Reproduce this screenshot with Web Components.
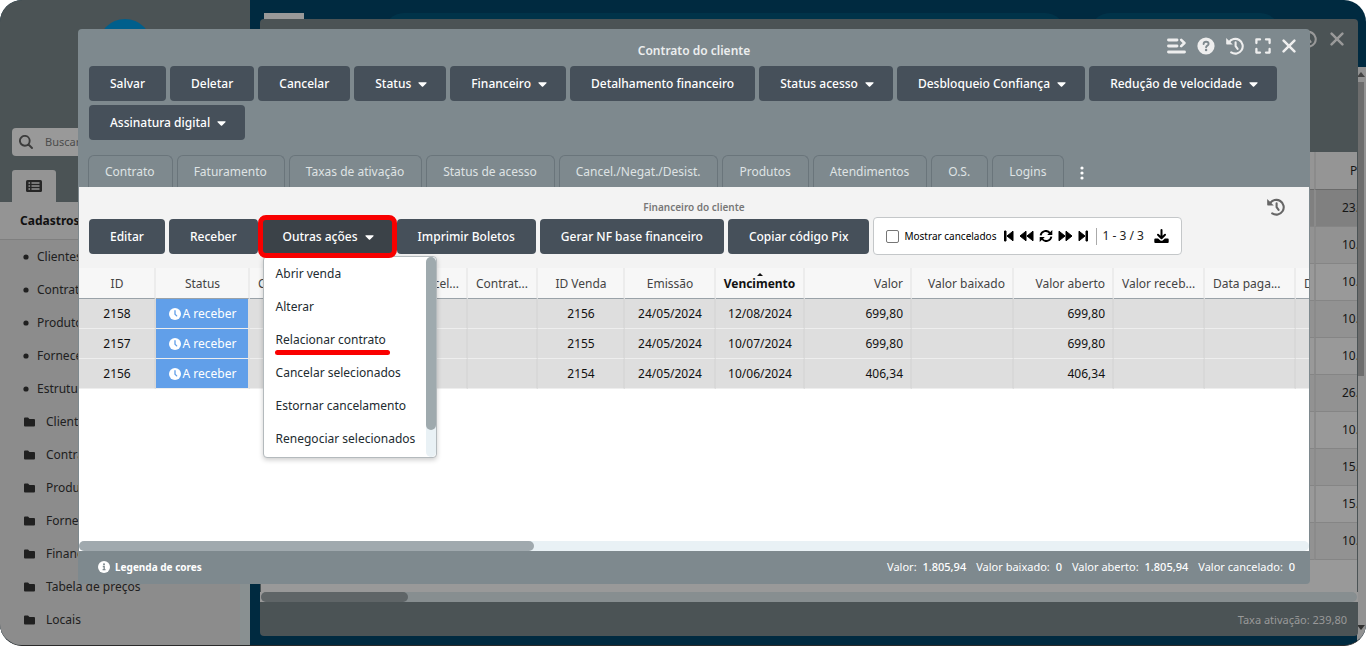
<!DOCTYPE html>
<html lang="pt-BR">
<head>
<meta charset="utf-8">
<title>Contrato do cliente</title>
<style>
html,body{margin:0;height:100%;background:#fff}
body{font:12px/16px "Noto Sans","Open Sans",sans-serif;color:#222}
</style>
</head>
<body>
<app-shell></app-shell>
<script>
const BASE = `*{box-sizing:border-box}button{font:inherit;color:inherit;background:none;border:0;margin:0;padding:0;cursor:pointer}svg{display:block;flex:none}a{color:inherit;text-decoration:none}table{border-collapse:separate;border-spacing:0;table-layout:fixed}`;
const define = (name, html, setup) => {
  const t = document.createElement('template');
  t.innerHTML = html.replace('<style>', '<style>' + BASE);
  customElements.define(name, class extends HTMLElement {
    constructor() {
      super();
      this.attachShadow({ mode: 'open' }).append(t.content.cloneNode(true));
      if (setup) setup(this, this.shadowRoot);
    }
  });
};

const ICONS = {
  caret: ['0 0 320 512', 9, 14, '<path fill="currentColor" d="M31.3 192h257.3c17.8 0 26.7 21.5 14.1 34.1L174.1 354.8c-7.8 7.8-20.5 7.8-28.3 0L17.2 226.1C4.6 213.5 13.5 192 31.3 192z"/>'],
  history: ['0 0 18 18', 18, 18, '<g fill="none" stroke="currentColor" stroke-width="2.1" stroke-linecap="round" stroke-linejoin="round"><path d="M3 5.400A7.400 7.400 0 1 1 5.200 15.400"/><path d="M9.600 5.400v3.800l2 2.600"/></g><path fill="currentColor" d="M.2 1v5.400c0 .6.4 1 1 1h5.600z"/>'],
  close: ['0 0 14 14', 14, 14, '<path fill="none" stroke="currentColor" stroke-width="2.5" stroke-linecap="round" d="M1.6 1.6l10.800 10.800M12.400 1.600L1.600 12.400"/>'],
  expand: ['0 0 16 16', 16, 16, '<path fill="none" stroke="currentColor" stroke-width="2.3" stroke-linecap="round" stroke-linejoin="round" d="M1.400 5v-3.600h3.600M11 1.400h3.600v3.600M14.600 11v3.600h-3.600M5 14.600h-3.600v-3.600"/>'],
  help: ['0 0 18 18', 18, 18, '<circle cx="9" cy="9" r="8.600" fill="currentColor"/><path fill="none" stroke="#7e898e" stroke-width="1.9" stroke-linecap="round" d="M6.600 7c.1-1.500 1.200-2.200 2.500-2.200 1.400 0 2.500.8 2.500 2.100 0 1.700-2.500 1.700-2.500 3.300"/><circle cx="9.100" cy="13" r="1.200" fill="#7e898e"/>'],
  lines: ['0 0 19 16', 19, 16, '<g fill="none" stroke="currentColor" stroke-width="2.900" stroke-linecap="round"><path d="M1.500 2h8.500M1.500 8h8.500M1.500 14h16"/><path stroke-width="2.600" stroke-linejoin="round" d="M14.200 1.800l3.200 3.200-3.200 3.200"/></g>'],
  clock: ['0 0 12 12', 12, 12, '<circle cx="6" cy="6" r="6" fill="#fff"/><path fill="none" stroke="#619fe9" stroke-width="1.300" stroke-linecap="round" d="M6 2.700v3.500l1.700 1.700"/>'],
  info: ['0 0 12 12', 12, 12, '<circle cx="6" cy="6" r="6" fill="#fff"/><circle cx="6" cy="3.200" r="1" fill="#7e898e"/><path fill="none" stroke="#7e898e" stroke-width="1.300" d="M4.800 5.500h1.400v3M4.600 8.700h2.900"/>'],
  folder: ['0 0 11 10', 11, 10, '<path fill="currentColor" d="M0 1.500Q0 .5 1 .5h3L5.500 2H10q1 0 1 1v5.500q0 1-1 1H1q-1 0-1-1z"/>'],
  dot: ['0 0 6 6', 6, 6, '<circle cx="3" cy="3" r="2.600" fill="currentColor"/>'],
  search: ['0 0 14 14', 14, 14, '<path fill="none" stroke="currentColor" stroke-width="1.900" stroke-linecap="round" d="M9.500 9.500L13 13M10.700 5.800a4.900 4.900 0 1 1-9.800 0 4.900 4.900 0 0 1 9.800 0z"/>'],
  list: ['0 0 16 12', 16, 12, '<rect width="16" height="12" rx="1.500" fill="currentColor"/><path stroke="#949494" stroke-width="1.300" d="M2.500 3h1.600M2.500 6h1.600M2.500 9h1.600M5.500 3h8M5.500 6h8M5.500 9h8"/>'],
  first: ['0 0 10 12', 10, 12, '<path fill="currentColor" stroke="currentColor" stroke-linejoin="round" d="M.5 1H2v10H.5zM9 1.200v9.600L3 6z"/>'],
  prev: ['0 0 15 12', 15, 12, '<path fill="currentColor" stroke="currentColor" stroke-linejoin="round" d="M7 1.200v9.600L1 6zM14 1.200v9.600L8 6z"/>'],
  next: ['0 0 15 12', 15, 12, '<path fill="currentColor" stroke="currentColor" stroke-linejoin="round" d="M1 1.200v9.600L7 6zM8 1.200v9.600L14 6z"/>'],
  last: ['0 0 10 12', 10, 12, '<path fill="currentColor" stroke="currentColor" stroke-linejoin="round" d="M8 1h1.500v10H8zM1 1.200v9.600L7 6z"/>'],
  refresh: ['0 0 14 12', 14, 12, '<path fill="none" stroke="currentColor" stroke-width="1.900" d="M1.600 5.300A5.200 5.200 0 0 1 11 3.200M12.400 6.700A5.200 5.200 0 0 1 3 8.800"/><path fill="currentColor" d="M13.300 0v5H8.200zM.7 12V7h5.100z"/>'],
  download: ['0 0 15 14', 15, 14, '<path fill="none" stroke="currentColor" stroke-width="2" stroke-linecap="round" stroke-linejoin="round" d="M7.500 1v8M4 5.800L7.500 9.200 11 5.800"/><path fill="currentColor" d="M1.300 9.600h2.800l2 1.700q1.400 1 2.800 0l2-1.700h2.800q1 0 1 1v2.400q0 1-1 1H1.300q-1 0-1-1v-2.400q0-1 1-1z"/>']
};
const icon = n => { const [v, w, h, p] = ICONS[n]; return `<svg viewBox="${v}" width="${w}" height="${h}" aria-hidden="true">${p}</svg>`; };

define('action-button', `<style>
:host{display:block}
button{display:flex;align-items:center;gap:7px;height:35px;padding:0 21px;border-radius:4px;background:#46505a;color:#fff;white-space:nowrap;font-weight:500}
svg{display:none}
:host([menu]) svg{display:block}
:host([menu]) button{padding-right:19px}
:host([marked]) button{background:#3b4248;outline:5px solid #f80000;outline-offset:-1px;border-radius:4px}
</style><button type="button"><slot></slot>${icon('caret')}</button>`);

define('tab-item', `<style>
:host{display:block}
button{height:32px;padding:0 17px 0 16px;border:1px solid #6a757b;border-bottom:0;border-radius:6px 6px 0 0;color:#dfe3e4;white-space:nowrap}
</style><button type="button" role="tab"><slot></slot></button>`);

define('icon-button', `<style>:host{display:block}button{display:block}</style><button type="button"></button>`, (el, root) => {
  const b = root.querySelector('button');
  b.innerHTML = icon(el.getAttribute('icon'));
  b.setAttribute('aria-label', el.getAttribute('label'));
});

define('side-item', `<style>
:host{display:block}
a{display:flex;align-items:center;height:33px;padding-left:23px;gap:8px;white-space:nowrap;color:#202020}
:host([folder]) a{padding-left:24px;gap:11px}
</style><a href="#"><span></span><slot></slot></a>`, (el, root) => {
  root.querySelector('span').innerHTML = icon(el.hasAttribute('folder') ? 'folder' : 'dot');
});

define('side-nav', `<style>
:host{display:flex;flex-direction:column;width:250px;background:#4b5355;overflow:hidden}
.logo{width:54px;height:54px;margin:19px auto 55px;border-radius:50%;background:#005f8c}
.search{display:flex;align-items:center;gap:12px;height:28px;margin:0 12px 14px;padding-left:7px;border-radius:4px;background:#999;color:#3c3c3c}
.search input{flex:1;min-width:0;border:0;background:none;font:inherit;font-size:11px;outline:0;padding:0}
.search input::placeholder{color:#4c4c4c}
.tab{display:flex;align-items:center;justify-content:center;width:44px;height:32px;margin-left:12px;background:#949494;border-radius:3px 3px 0 0;color:#262626}
.body{flex:1;display:flex;flex-direction:column;background:#8c8c8c}
h2{margin:0;height:38px;padding-left:20px;font-size:12px;line-height:37px;font-weight:700;background:#949494;border-bottom:1px solid #7f7f7f;color:#111}
nav{flex:1;border-right:10px solid #899091}
</style>
<div class="logo"></div>
<label class="search">${icon('search')}<input type="search" placeholder="Buscar" aria-label="Buscar"></label>
<button class="tab" type="button" aria-label="Menu">${icon('list')}</button>
<div class="body"><h2>Cadastros</h2><nav>
<side-item>Clientes</side-item><side-item>Contratos</side-item><side-item>Produtos</side-item><side-item>Fornecedores</side-item><side-item>Estrutura</side-item>
<side-item folder>Clientes</side-item><side-item folder>Contratos</side-item><side-item folder>Produtos</side-item><side-item folder>Fornecedores</side-item><side-item folder>Financeiro</side-item><side-item folder>Tabela de preços</side-item><side-item folder>Locais</side-item>
</nav></div>`);

define('back-window', `<style>
:host{display:flex;flex-direction:column;background:#4b5355;border-radius:4px;overflow:hidden;color:#161616}
header{display:flex;justify-content:flex-end;gap:13px;height:133px;padding:13px 14px 0 0;color:#999;align-items:flex-start}
header :first-child{margin-top:-2px}
.grid{flex:1;margin:0 1px;background:#999;overflow:hidden}
table{width:100%}
th,td{height:37px;padding:0;text-align:left;font-weight:400;border-bottom:1px solid #858585;overflow:hidden;white-space:nowrap}
th{height:38px;border-bottom-color:#6a6a6a;background:#959595}
td:last-child,th:last-child{width:43px;padding-left:26px;border-left:2px solid #8b8b8b}
th:last-child{padding-left:34px}
tr:nth-child(even) td{background:#929292}
tbody tr:first-child td{background:#808080}
.bar{height:10px;margin:0 1px;background:#878e90;border-radius:5px}
.bar i{display:block;width:147px;height:10px;border-radius:5px;background:#5f6567}
.track{background:#999}
footer{height:34px;padding:0 11px;font-size:11px;line-height:36px;text-align:right;color:#999}
</style>
<header><icon-button icon="history" label="Histórico"></icon-button><icon-button icon="close" label="Fechar"></icon-button></header>
<div class="grid"><table><thead><tr><th></th><th>P</th></tr></thead><tbody></tbody></table></div>
<div class="track"><div class="bar"><i></i></div></div>
<footer>Taxa ativação: 239,80</footer>`, (el, root) => {
  root.querySelector('tbody').innerHTML = ['23.', '10.', '10.', '10.', '10.', '26.', '10.', '15.', '15.', '10.'].map(v => `<tr><td></td><td>${v}</td></tr>`).join('');
});

define('drop-menu', `<style>
:host{display:flex;width:174px;height:202px;background:#fff;border:1px solid #b4babd;border-radius:4px;box-shadow:0 2px 5px #0003;overflow:hidden}
ul{flex:1;margin:0;padding:0;list-style:none}
a{display:block;height:33px;padding-left:12px;line-height:33px;white-space:nowrap;color:#222b30}
.mark{position:relative}
.mark::after{content:"";position:absolute;left:11px;top:27px;width:115px;height:5px;border-radius:3px;background:#fa0000}
.track{width:10px;background:#e9f1f5;border-radius:5px}
.track i{display:block;height:173px;border-radius:5px;background:#9faaae}
</style>
<ul><li><a href="#">Abrir venda</a></li><li><a href="#">Alterar</a></li><li class="mark"><a href="#">Relacionar contrato</a></li><li><a href="#">Cancelar selecionados</a></li><li><a href="#">Estornar cancelamento</a></li><li><a href="#">Renegociar selecionados</a></li></ul>
<div class="track"><i></i></div>`);

define('pager-box', `<style>
:host{display:flex;align-items:center;height:38px;padding:0 12px;border:1px solid #c4c7c9;border-radius:4px;background:#fff;color:#000;white-space:nowrap}
label{display:flex;align-items:center;gap:5px;font-size:10px;margin-right:8px}
input{appearance:none;width:13px;height:13px;margin:0;border:1px solid #767676;border-radius:2px;background:#fff}
nav{display:flex;align-items:center;gap:5px;padding-right:8px;border-right:1px solid #aaa;margin-right:5px;height:17px}
span{margin-right:10px;color:#222}
</style>
<label><input type="checkbox">Mostrar cancelados</label>
<nav><icon-button icon="first" label="Primeira"></icon-button><icon-button icon="prev" label="Anterior"></icon-button><icon-button icon="refresh" label="Atualizar"></icon-button><icon-button icon="next" label="Próxima"></icon-button><icon-button icon="last" label="Última"></icon-button></nav>
<span>1 - 3 / 3</span><icon-button icon="download" label="Exportar"></icon-button>`);

define('data-grid', `<style>
:host{display:block;overflow:hidden;background:#fff}
table{width:1288px}
th,td{height:30px;padding:0 7px 0 8px;overflow:hidden;text-overflow:ellipsis;white-space:nowrap;text-align:center;border-right:2px solid #ececec}
th{position:relative;height:31px;padding-top:2px;background:#f7f7f7;font-weight:400;color:#444;border-bottom:1px solid #9aa2a8}
td{background:#dedede;border-right-color:#d8d8d8;border-bottom:1px solid #eee;color:#111}
.l{text-align:left;padding-right:4px}.r{text-align:right}
.sort{padding-left:4px;padding-right:4px;font-weight:700;color:#111}
.sort::before{content:"";position:absolute;left:calc(50% - 3px);top:5px;border:3px solid transparent;border-top:0;border-bottom-color:#111}
td.st{background:#619fe9;border-right-color:#dedede;color:#fff}
.st div{display:flex;align-items:center;justify-content:center;gap:2px}
</style><table><colgroup></colgroup><thead><tr></tr></thead><tbody></tbody></table>`, (el, root) => {
  const cols = [[77, 'ID'], [94, 'Status', 'st'], [75, 'Contrato', 'l'], [73, ''], [70, 'Cancel...', 'r'], [70, 'Contrat...', 'l'], [87, 'ID Venda'], [91, 'Emissão'], [89, 'Vencimento', 'sort'], [107, 'Valor', 'r'], [102, 'Valor baixado', 'r'], [100, 'Valor aberto', 'r'], [91, 'Valor receb...', 'l'], [91, 'Data paga...', 'l'], [71, 'Data', 'l']];
  const rows = [['2158', '2156', '12/08/2024', '699,80'], ['2157', '2155', '10/07/2024', '699,80'], ['2156', '2154', '10/06/2024', '406,34']];
  const status = `<div>${icon('clock')}A receber</div>`;
  root.querySelector('colgroup').innerHTML = cols.map(c => `<col style="width:${c[0]}px">`).join('');
  root.querySelector('thead tr').innerHTML = cols.map(c => `<th class="${c[2] || ''}">${c[1]}</th>`).join('');
  root.querySelector('tbody').innerHTML = rows.map(([id, sale, due, val]) =>
    '<tr>' + [id, status, '', '', '', '', sale, '24/05/2024', due, val, '', val, '', '', ''].map((v, i) => `<td class="${['st', 'r'].includes(cols[i][2]) ? cols[i][2] : ''}">${v}</td>`).join('') + '</tr>').join('');
});

define('contract-window', `<style>
:host{display:flex;flex-direction:column;background:#7e898e;border-radius:4px;overflow:hidden}
header{display:grid;grid-template-columns:1fr auto 1fr;height:37px;padding:0 14px}
h1{grid-column:2;margin:0;font-size:12px;line-height:43px;font-weight:600;color:#eceeee}
.tools{display:flex;justify-content:flex-end;align-items:center;gap:11px;height:33px;color:#eee}
.bar{display:flex;flex-wrap:wrap;gap:4px;padding:0 11px}
.tabs{display:flex;gap:4px;padding:15px 10px 0}
.more{width:20px;padding:3px 0 0 8px;color:#fff}
.panel{flex:1;display:flex;flex-direction:column;margin:0 1px;background:#f3f3f3;min-height:0}
.head{display:grid;grid-template-columns:1fr auto 1fr;height:30px;padding:0 24px}
h2{grid-column:2;margin:0;font-size:10px;line-height:40px;font-weight:600;color:#777}
.hist{display:flex;justify-content:flex-end;align-items:center;height:40px;color:#666}
.sub{position:relative;display:flex;flex-wrap:wrap;align-items:flex-end;gap:4px;padding:0 10px 13px}
.sub action-button{margin-bottom:1px}
.anchor{position:relative;z-index:1}
drop-menu{position:absolute;left:1px;top:37px;z-index:-1}
data-grid{flex:1}
.track{background:#fff}
.track div{background:#e9f1f5;border-radius:5px}
.track i{display:block;width:37%;height:10px;border-radius:5px;background:#a0a9ae}
footer{display:flex;align-items:center;gap:10px;height:33px;padding:0 15px 2px 20px;color:#fff;font-size:11px}
footer button{display:flex;align-items:center;gap:5px;font-size:10px;font-weight:700;margin-right:auto}
footer b{font-weight:500;margin-left:3px}
</style>
<header><h1>Contrato do cliente</h1><div class="tools"><icon-button icon="lines" label="Recolher"></icon-button><icon-button icon="help" label="Ajuda"></icon-button><icon-button icon="history" label="Histórico"></icon-button><icon-button icon="expand" label="Expandir"></icon-button><icon-button icon="close" label="Fechar"></icon-button></div></header>
<div class="bar"><action-button>Salvar</action-button><action-button>Deletar</action-button><action-button>Cancelar</action-button><action-button menu>Status</action-button><action-button menu>Financeiro</action-button><action-button>Detalhamento financeiro</action-button><action-button menu>Status acesso</action-button><action-button menu>Desbloqueio Confiança</action-button><action-button menu>Redução de velocidade</action-button><action-button menu>Assinatura digital</action-button></div>
<div class="tabs" role="tablist"><tab-item>Contrato</tab-item><tab-item>Faturamento</tab-item><tab-item>Taxas de ativação</tab-item><tab-item>Status de acesso</tab-item><tab-item>Cancel./Negat./Desist.</tab-item><tab-item>Produtos</tab-item><tab-item>Atendimentos</tab-item><tab-item>O.S.</tab-item><tab-item>Logins</tab-item><button class="more" type="button" aria-label="Mais"><svg width="12" height="14" viewBox="0 0 12 14"><g fill="currentColor"><circle cx="6" cy="2" r="1.600"/><circle cx="6" cy="7" r="1.600"/><circle cx="6" cy="12" r="1.600"/></g></svg></button></div>
<div class="panel">
<div class="head"><h2>Financeiro do cliente</h2><div class="hist"><icon-button icon="history" label="Histórico"></icon-button></div></div>
<div class="sub"><action-button>Editar</action-button><action-button>Receber</action-button><div class="anchor"><action-button menu marked>Outras ações</action-button><drop-menu></drop-menu></div><action-button>Imprimir Boletos</action-button><action-button>Gerar NF base financeiro</action-button><action-button>Copiar código Pix</action-button><pager-box></pager-box></div>
<data-grid></data-grid>
<div class="track"><div><i></i></div></div>
</div>
<footer><button type="button">${icon('info')}Legenda de cores</button><span>Valor: <b>1.805,94</b></span><span>Valor baixado: <b>0</b></span><span>Valor aberto: <b>1.805,94</b></span><span>Valor cancelado: <b>0</b></span></footer>`);

define('app-shell', `<style>
:host{position:relative;display:grid;grid-template-columns:250px 1fr;height:100vh;min-height:600px;border-radius:22px;overflow:hidden;background:#002a40;border-bottom:1px solid #2a2a2a;box-sizing:border-box}
.desk{position:relative;display:grid;grid-template-rows:67px 1fr}
.top{display:flex;padding:13px 86px 0 14px}
.top i{height:40px;border-radius:20px;background:#003349}
.top .brand{width:40px;border-radius:0;background:#999;margin-right:80px}
.top .nav{flex:1;margin-right:25px}
.top .user{width:190px}
.scroll{justify-self:end;width:9px;background:#929292;display:flex;flex-direction:column;align-items:flex-start}
.scroll::before{content:"";border:4px solid transparent;border-top:0;border-bottom:5px solid #444;margin:5px 0}
.scroll::after{content:"";border:4px solid transparent;border-bottom:0;border-top:5px solid #333;margin:auto 0 15px}
.scroll i{width:7px;height:294px;background:#6d6d6d}
back-window{position:absolute;left:10px;right:8px;top:19px;bottom:9px}
contract-window{position:absolute;left:78px;right:56px;top:29px;bottom:61px}
</style>
<side-nav></side-nav>
<div class="desk"><div class="top"><i class="brand"></i><i class="nav"></i><i class="user"></i></div><div class="scroll"><i></i></div><back-window></back-window></div>
<contract-window></contract-window>`);
</script>
</body>
</html>
